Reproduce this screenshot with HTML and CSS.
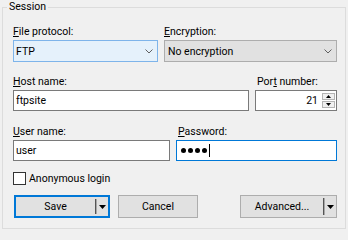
FILE: index.html
```html
<!DOCTYPE html>
<html lang="en">
<head>
    <meta charset="UTF-8">
    <title>Session</title>
    <link rel="stylesheet" href="styles.css">
</head>
<body>
    <fieldset class="session">
        <legend>Session</legend>

        <div class="row row-combo">
            <div class="field field-protocol">
                <label><u>F</u>ile protocol:</label>
                <div class="combo hot">
                    <span>FTP</span>
                    <svg class="chevron" width="8" height="5" viewBox="0 0 8 5"><path d="M0.5 0.5L4 4L7.5 0.5" /></svg>
                </div>
            </div>
            <div class="field field-grow">
                <label><u>E</u>ncryption:</label>
                <div class="combo">
                    <span>No encryption</span>
                    <svg class="chevron" width="8" height="5" viewBox="0 0 8 5"><path d="M0.5 0.5L4 4L7.5 0.5" /></svg>
                </div>
            </div>
        </div>

        <div class="row row-edit">
            <div class="field field-grow">
                <label><u>H</u>ost name:</label>
                <div class="edit">ftpsite</div>
            </div>
            <div class="field field-port">
                <label class="inset">Por<u>t</u> number:</label>
                <div class="edit port">
                    <span class="port-value">21</span>
                    <div class="spin">
                        <span class="spin-btn"><svg width="5" height="3" viewBox="0 0 5 3"><path d="M2.5 0L5 3H0z" /></svg></span>
                        <span class="spin-btn"><svg width="5" height="3" viewBox="0 0 5 3"><path d="M0 0h5L2.5 3z" /></svg></span>
                    </div>
                </div>
            </div>
        </div>

        <div class="row row-edit">
            <div class="field field-user">
                <label><u>U</u>ser name:</label>
                <div class="edit">user</div>
            </div>
            <div class="field field-grow">
                <label class="inset"><u>P</u>assword:</label>
                <div class="edit focus">
                    <span class="dot"></span><span class="dot"></span><span class="dot"></span><span class="dot"></span>
                    <span class="caret"></span>
                </div>
            </div>
        </div>

        <label class="check"><span class="box"></span>Anonymous login</label>

        <div class="buttons">
            <div class="btn split default">
                <span class="btn-text">Save</span>
                <span class="sep"></span>
                <span class="drop"><svg width="7" height="4" viewBox="0 0 7 4"><path d="M0 0h7L3.5 4z" /></svg></span>
            </div>
            <div class="btn cancel">Cancel</div>
            <div class="btn split advanced">
                <span class="btn-text">Advanced...</span>
                <span class="sep"></span>
                <span class="drop"><svg width="7" height="4" viewBox="0 0 7 4"><path d="M0 0h7L3.5 4z" /></svg></span>
            </div>
        </div>
    </fieldset>
</body>
</html>
```

FILE: styles.css
```css
* {
    box-sizing: border-box;
}

body {
    margin: 0;
    background: #f0f0f0;
    color: #000;
    font-family: Roboto, "Liberation Sans", sans-serif;
    font-size: 10.5px;
    height: 240px;
    overflow: hidden;
}

.session {
    margin: 0 2px;
    padding: 10px 8px 10px 10px;
    border: 1px solid #dcdcdc;
    min-width: 0;
}

.session legend {
    margin-left: -6px;
    padding: 0 2px;
    line-height: 14px;
}

u {
    text-underline-offset: 1px;
}

/* rows of labelled fields */
.row {
    display: flex;
    gap: 6px;
}

.row-combo {
    margin-bottom: 12px;
}

.row-edit {
    margin-bottom: 13px;
}

.field {
    display: flex;
    flex-direction: column;
}

.field label {
    display: block;
    line-height: 15px;
    margin-bottom: 1px;
}

.field label.inset {
    padding-left: 2px;
}

.field-grow {
    flex: 1;
}

.field-protocol {
    width: 145px;
}

.field-port {
    width: 82px;
}

.field-user {
    width: 157px;
}

/* combo boxes */
.combo {
    height: 22px;
    border: 1px solid #adadad;
    background: #e1e1e1;
    display: flex;
    align-items: center;
    justify-content: space-between;
    padding: 0 4px 0 3px;
}

.combo.hot {
    border-color: #7eb4ea;
    background: #e5f1fb;
    padding-left: 2px;
}

.chevron path {
    fill: none;
    stroke: #606060;
    stroke-width: 1;
}

/* edit boxes */
.edit {
    height: 21px;
    border: 1px solid #7a7a7a;
    background: #fff;
    display: flex;
    align-items: center;
    padding: 0 2px;
}

.edit.focus {
    border-color: #0078d7;
    padding-left: 4px;
}

.port {
    padding-right: 1px;
}

.port-value {
    flex: 1;
    text-align: right;
    padding-right: 4px;
}

.spin {
    display: flex;
    flex-direction: column;
    gap: 1px;
}

.spin-btn {
    width: 13px;
    height: 7px;
    border: 1px solid #b4b4b4;
    background: #f0f0f0;
    display: flex;
    align-items: center;
    justify-content: center;
}

.spin-btn svg {
    display: block;
}

.dot {
    width: 5px;
    height: 5px;
    border-radius: 50%;
    background: #000;
    margin-right: 2px;
}

.caret {
    width: 1px;
    height: 13px;
    background: #000;
}

/* checkbox */
.check {
    display: flex;
    align-items: center;
    height: 13px;
    margin-top: -2px;
    line-height: 13px;
}

.check .box {
    width: 13px;
    height: 13px;
    border: 1px solid #333;
    background: #fff;
    margin-right: 3px;
}

/* buttons */
.buttons {
    display: flex;
    margin-top: 10px;
}

.btn {
    height: 23px;
    border: 1px solid #adadad;
    background: #e1e1e1;
    display: flex;
    align-items: center;
    justify-content: center;
}

.btn.default {
    border: 2px solid #0078d7;
    width: 96px;
    margin-left: 1px;
}

.cancel {
    width: 80px;
    margin-left: 8px;
}

.advanced {
    width: 97px;
    margin-left: auto;
}

.split {
    justify-content: flex-start;
}

.btn-text {
    flex: 1;
    text-align: center;
}

.sep {
    align-self: stretch;
    width: 2px;
    margin: 2px 0;
    border-left: 1px solid #555;
    border-right: 1px solid #a8a8a8;
}

.drop {
    width: 11px;
    display: flex;
    justify-content: center;
}

.drop svg {
    display: block;
}
```
